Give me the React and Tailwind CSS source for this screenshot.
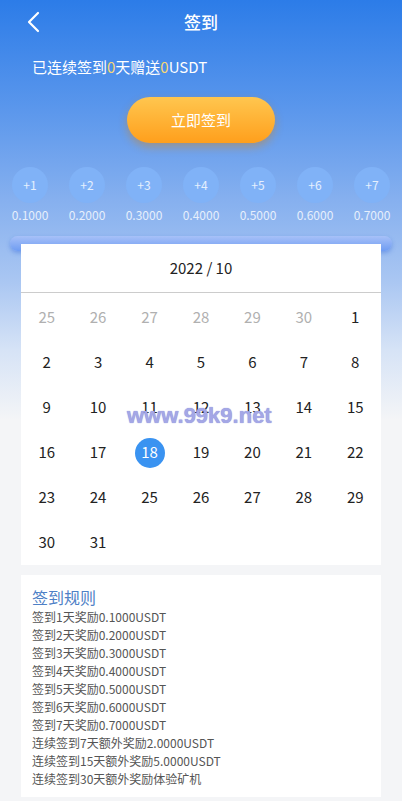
import React from 'react'

const rewards = ['0.1000', '0.2000', '0.3000', '0.4000', '0.5000', '0.6000', '0.7000']

const rules = [
  '签到1天奖励0.1000USDT',
  '签到2天奖励0.2000USDT',
  '签到3天奖励0.3000USDT',
  '签到4天奖励0.4000USDT',
  '签到5天奖励0.5000USDT',
  '签到6天奖励0.6000USDT',
  '签到7天奖励0.7000USDT',
  '连续签到7天额外奖励2.0000USDT',
  '连续签到15天额外奖励5.0000USDT',
  '连续签到30天额外奖励体验矿机',
]

const days = [
  ...[25, 26, 27, 28, 29, 30].map(d => ({ d, muted: true })),
  ...Array.from({ length: 31 }, (_, i) => ({ d: i + 1, muted: false })),
]

const App = () => {
  return (
    <div className="min-h-[801px] w-full bg-[#f4f5f7] font-['Noto_Sans_CJK_SC',sans-serif]">
      <div className="bg-[linear-gradient(180deg,#2c7ce8_0px,#5b97ec_110px,#86b0ef_200px,#a9c6f2_280px,#d6e3f6_350px,#f4f5f7_420px)] pb-[10px]">
        {/* header */}
        <div className="relative flex h-[44px] items-center justify-center">
          <button className="absolute left-[24px] top-[10px] text-white">
            <svg width="20" height="24" viewBox="0 0 20 24" fill="none">
              <path d="M14 3 L5 12 L14 21" stroke="white" strokeWidth="2.2" strokeLinecap="round" strokeLinejoin="round" />
            </svg>
          </button>
          <span className="text-[17px] font-medium text-white">签到</span>
        </div>

        <div className="px-[32px] pt-[13px] text-[15px] leading-[20px] text-white">
          已连续签到<span className="text-[#f7d774]">0</span>天赠送<span className="text-[#f7d774]">0</span>USDT
        </div>

        <div className="mt-[20px] flex justify-center">
          <button className="h-[46px] w-[148px] rounded-full bg-[linear-gradient(180deg,#ffc64f,#ff9f1c)] text-[15px] text-white shadow-[0_4px_8px_rgba(214,130,20,0.45)]">
            立即签到
          </button>
        </div>

        {/* reward steps */}
        <div className="mt-[24px] flex justify-between px-[10px]">
          {rewards.map((r, i) => (
            <div key={r} className="flex w-[40px] flex-col items-center">
              <div className="flex h-[36px] w-[36px] items-center justify-center rounded-full bg-[#80b2f7] text-[12px] text-white/80">
                +{i + 1}
              </div>
              <div className="mt-[4px] text-[12px] leading-[16px] text-[#e6effc]">{r}</div>
            </div>
          ))}
        </div>

        {/* calendar */}
        <div className="mt-[13px]">
          <div className="mx-[10px] h-[15px] rounded-full bg-[linear-gradient(180deg,#a7c1f8,#6f9cf2)] shadow-[0_2px_4px_rgba(60,110,220,0.45)]" />
          <div className="relative mx-[21px] -mt-[7px] bg-white">
            <div className="flex h-[49px] items-center justify-center border-b border-[#cccccc] text-[15px] text-[#222]">
              2022 / 10
            </div>
            <div className="grid grid-cols-7 pt-[2px]">
              {days.map((item, i) => (
                <div key={i} className="flex h-[45px] items-center justify-center">
                  {item.d === 18 && !item.muted ? (
                    <span className="flex h-[30px] w-[30px] items-center justify-center rounded-full bg-[#3a93f1] text-[15px] text-white">
                      18
                    </span>
                  ) : (
                    <span className={`text-[15px] ${item.muted ? 'text-[#b0b0b0]' : 'text-[#222]'}`}>{item.d}</span>
                  )}
                </div>
              ))}
            </div>
            <div className="pointer-events-none absolute left-[106px] top-[155px] font-['Liberation_Sans',sans-serif] text-[22px] font-bold text-[#a4a7e6] [text-shadow:0_0_1px_#7d80cf]">
              www.99k9.net
            </div>
          </div>
        </div>
      </div>

      {/* rules */}
      <div className="mx-[21px] bg-white px-[11px] pb-[9px] pt-[11px]">
        <div className="text-[16px] leading-[22px] text-[#4e80c6]">签到规则</div>
        {rules.map(r => (
          <div key={r} className="text-[12px] leading-[18px] text-[#555]">{r}</div>
        ))}
      </div>
    </div>
  )
}

export default App
